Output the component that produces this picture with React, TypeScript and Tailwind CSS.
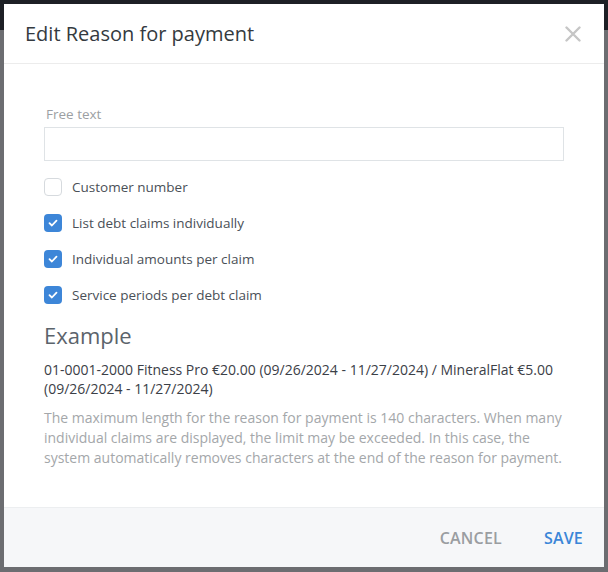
import { useState } from "react";

const font = { fontFamily: "'Open Sans', 'Noto Sans', sans-serif" };

function Check({ checked, label, onToggle }: { checked: boolean; label: string; onToggle: () => void }) {
  return (
    <label className="flex h-9 items-center gap-[10px] cursor-pointer" onClick={onToggle}>
      {checked ? (
        <span className="flex h-[18px] w-[18px] items-center justify-center rounded-[4px] bg-[#3d86d8]">
          <svg width="12" height="12" viewBox="0 0 12 12" fill="none">
            <path d="M2.5 6.2l2.4 2.3 4.6-4.8" stroke="white" strokeWidth="1.8" strokeLinecap="round" strokeLinejoin="round" />
          </svg>
        </span>
      ) : (
        <span className="h-[18px] w-[18px] rounded-[4px] border border-[#d6dade] bg-white" />
      )}
      <span className="text-[13.5px] text-[#4a5057]">{label}</span>
    </label>
  );
}

export default function App() {
  const [opts, setOpts] = useState([false, true, true, true]);
  const labels = [
    "Customer number",
    "List debt claims individually",
    "Individual amounts per claim",
    "Service periods per debt claim",
  ];

  const toggle = (i: number) => setOpts(opts.map((v, j) => (j === i ? !v : v)));

  return (
    <div className="flex h-[572px] w-[608px] flex-col bg-[#6c6d71]" style={font}>
      {/* Backdrop top bar */}
      <div className="relative h-full w-full">
        <div className="h-[30px] w-full bg-[#1d2025]" />
        <div className="absolute left-[4px] top-[4px] flex h-[563px] w-[600px] flex-col bg-white">
          {/* Header */}
          <div className="flex h-[60px] items-center justify-between border-b border-[#ececec] pl-[21px] pr-[21px]">
            <h2 className="text-[20px] text-[#343a40]">Edit Reason for payment</h2>
            <button className="flex h-5 w-5 items-center justify-center">
              <svg width="16" height="16" viewBox="0 0 16 16" fill="none">
                <path d="M1.5 1.5l13 13M14.5 1.5l-13 13" stroke="#c6c6c6" strokeWidth="2.4" strokeLinecap="round" />
              </svg>
            </button>
          </div>

          {/* Body */}
          <div className="flex-1 px-10 pt-[41px]">
            <div className="pl-[2px] text-[13.5px] leading-[18px] text-[#9c9fa3]">Free text</div>
            <input className="mt-1 h-[34px] w-full border border-[#dfe3e6] px-2 text-[14px] outline-none" />

            <div className="mt-2">
              {labels.map((l, i) => (
                <Check key={l} label={l} checked={opts[i]} onToggle={() => toggle(i)} />
              ))}
            </div>

            <h3 className="mt-[8px] text-[22px] leading-[28px] text-[#5b636b]">Example</h3>
            <p className="mt-[11px] text-[14px] leading-[19px] text-[#3b4047]">
              01-0001-2000 Fitness Pro €20.00 (09/26/2024 - 11/27/2024) / MineralFlat €5.00 (09/26/2024 - 11/27/2024)
            </p>
            <p className="mt-[10px] text-[14px] leading-[20px] text-[#a4a7aa]">
              The maximum length for the reason for payment is 140 characters. When many individual claims are displayed, the limit may be exceeded. In this case, the system automatically removes characters at the end of the reason for payment.
            </p>
          </div>

          {/* Footer */}
          <div className="flex h-[60px] items-center justify-end gap-[42px] border-t border-[#eceef0] bg-[#f6f7f9] pr-[21px]">
            <button className="text-[16px] font-semibold tracking-[0.2px] text-[#9a9da1]">CANCEL</button>
            <button className="text-[16px] font-semibold tracking-[0.2px] text-[#3b86d8]">SAVE</button>
          </div>
        </div>
      </div>
    </div>
  );
}
